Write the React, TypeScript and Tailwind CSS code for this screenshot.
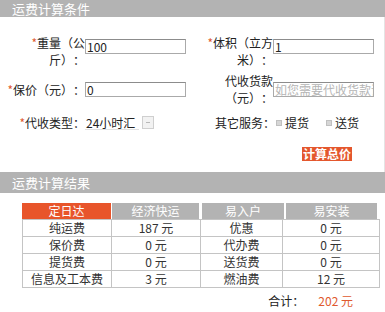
import React from "react";

const font = { fontFamily: '"Noto Sans CJK SC", "Liberation Sans", sans-serif' };

function Star() {
  return <span className="text-[#e0592f]">*</span>;
}

function Field({ value, placeholder }: { value?: string; placeholder?: string }) {
  return (
    <div className="w-[101px] h-[15px] border border-[#aaaaaa] border-t-[#8c8c8c] bg-white flex items-center px-[1px] overflow-hidden whitespace-nowrap text-[12px] leading-[13px]">
      {value ? (
        <span className="text-[#222]">{value}</span>
      ) : (
        <span className="text-[#b5b5b5]">{placeholder}</span>
      )}
    </div>
  );
}

function Check({ label }: { label: string }) {
  return (
    <span className="flex items-center gap-[3px]">
      <span className="w-[6px] h-[6px] bg-[#d6d6d6] border border-[#c0c0c0]" />
      <span>{label}</span>
    </span>
  );
}

const rows = [
  ["纯运费", "187 元", "优惠", "0 元"],
  ["保价费", "0 元", "代办费", "0 元"],
  ["提货费", "0 元", "送货费", "0 元"],
  ["信息及工本费", "3 元", "燃油费", "12 元"],
];

export default function App() {
  return (
    <div
      className="w-[385px] h-[312px] bg-white text-[12px] text-[#222] overflow-hidden [text-spacing-trim:space-all]"
      style={font}
    >
      <div className="h-[17px] bg-[#b3b3b3] text-white text-[13px] leading-[17px] pl-[12px]">运费计算条件</div>

      <div className="border-r border-[#e4e4e4] h-[155px]">
        {/* row 1 */}
        <div className="flex pt-[17px] leading-[17px]">
          <div className="w-[85px] pl-[2px] text-right">
            <Star />重量（公斤）：
          </div>
          <div className="mt-[5px]"><Field value="100" /></div>
          <div className="w-[87px] pl-[14px] text-right">
            <Star />体积（立方米）：
          </div>
          <div className="mt-[5px]"><Field value="1" /></div>
        </div>

        {/* row 2 */}
        <div className="flex items-center pt-[4px] leading-[17px]">
          <div className="w-[85px] text-right">
            <Star />保价（元）：
          </div>
          <Field value="0" />
          <div className="w-[87px] pl-[14px] text-right">代收货款（元）：</div>
          <Field placeholder="如您需要代收货款请填写" />
        </div>

        {/* row 3 */}
        <div className="flex items-center pt-[8px] leading-[17px]">
          <div className="w-[85px] text-right">
            <Star />代收类型：
          </div>
          <div className="w-[54px] h-[14px] border-b border-[#e2e2e2] flex items-center pl-[1px] whitespace-nowrap">24小时汇</div>
          <div className="ml-[3px] w-[12px] h-[13px] border border-[#cfcfcf] bg-[#f2f2f2] flex items-center justify-center">
            <span className="w-[4px] h-px bg-[#b8b8b8]" />
          </div>
          <div className="ml-[61px] flex items-center">
            <span>其它服务：</span>
            <span className="ml-[1px]"><Check label="提货" /></span>
            <span className="ml-[17px]"><Check label="送货" /></span>
          </div>
        </div>

        <div className="flex justify-end pr-[32px] pt-[16px]">
          <div className="h-[14px] px-[1px] bg-[#e4572d] text-white font-bold text-[12px] leading-[14px]">计算总价</div>
        </div>
      </div>

      <div className="h-[21px] bg-[#b3b3b3] text-white text-[13px] leading-[21px] pl-[12px]">运费计算结果</div>

      <div className="pl-[22px] pt-[10px]">
        <div className="flex h-[16px] text-white text-[12px] leading-[16px] text-center">
          <div className="w-[89px] bg-[#e8552b]">定日达</div>
          <div className="w-[87px] ml-px bg-[#b3b3b3]">经济快运</div>
          <div className="w-[82px] ml-[3px] bg-[#b3b3b3]">易入户</div>
          <div className="w-[91px] ml-[2px] bg-[#b3b3b3]">易安装</div>
        </div>
        <table className="border-collapse text-center leading-[16px] text-[#333]">
          <tbody>
            {rows.map((r) => (
              <tr key={r[0]} className="h-[17px]">
                <td className="w-[89px] border border-[#c4c4c4] p-0">{r[0]}</td>
                <td className="w-[89px] border border-[#c4c4c4] p-0">{r[1]}</td>
                <td className="w-[82px] border border-[#c4c4c4] p-0">{r[2]}</td>
                <td className="w-[97px] border border-[#c4c4c4] p-0">{r[3]}</td>
              </tr>
            ))}
          </tbody>
        </table>
        <div className="flex justify-end pr-[32px] pt-[4px] leading-[17px]">
          <span>合计：</span>
          <span className="ml-[14px] text-[#e0592f]">202 元</span>
        </div>
      </div>
    </div>
  );
}
